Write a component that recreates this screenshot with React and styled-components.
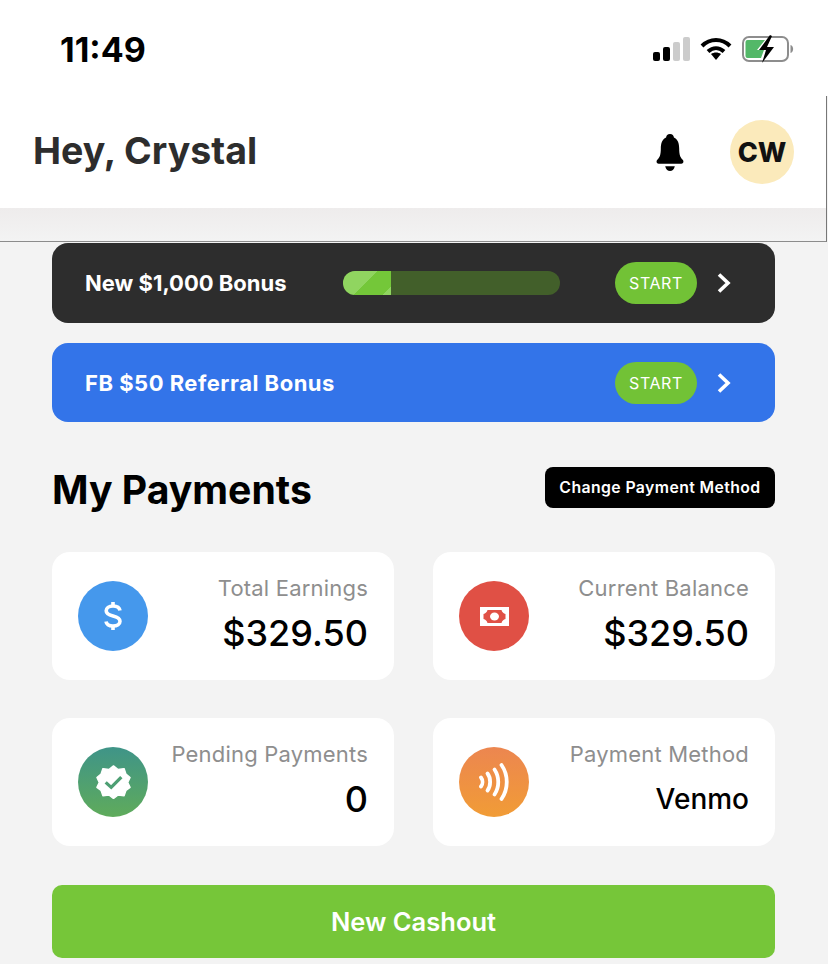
import styled, { createGlobalStyle } from "styled-components"

const GlobalStyle = createGlobalStyle`
    html, body {
        margin: 0;
        padding: 0;
        background-color: #f3f3f3;
    }
    * {
        box-sizing: border-box;
    }
    body {
        font-family: "Inter", "Liberation Sans", sans-serif;
    }
`;

const Page = styled.div`
    width: 828px;
    height: 964px;
    overflow: hidden;
    background-color: #f3f3f3;
`;

const StatusBar = styled.div`
    height: 96px;
    background-color: white;
    display: flex;
    align-items: center;
    justify-content: space-between;
    padding: 2px 33px 0 60px;
`;

const Time = styled.div`
    font-size: 34px;
    font-weight: 700;
    color: #000;
`;

const StatusIcons = styled.div`
    display: flex;
    align-items: center;
    gap: 10px;
`;

const HeaderFrame = styled.div`
    width: 827px;
    height: 146px;
    border-right: 1px solid #777;
    border-bottom: 1px solid #8c8c8c;
`;

const Header = styled.div`
    height: 112px;
    background-color: white;
    display: flex;
    align-items: center;
    padding: 0 32px 0 33px;
`;

const Greeting = styled.div`
    flex: 1;
    padding-bottom: 3px;
    font-size: 37.5px;
    font-weight: 700;
    color: #2d2d2d;
`;

const Bell = styled.svg`
    width: 28px;
    height: 37px;
    margin-right: 46px;
`;

const Avatar = styled.div`
    width: 64px;
    height: 64px;
    border-radius: 50%;
    background-color: #fbeabb;
    display: flex;
    align-items: center;
    justify-content: center;
    font-size: 27px;
    font-weight: 800;
    color: #111;
`;

const Shade = styled.div`
    height: 33px;
    background: linear-gradient(#eeecec, #f3f3f3);
`;

const Content = styled.div`
    padding: 1px 53px 0 52px;
`;

const Banner = styled.div`
    height: ${props => props.$height}px;
    margin-bottom: 20px;
    border-radius: 16px;
    background-color: ${props => props.$color};
    display: flex;
    align-items: center;
    padding: 0 43px 0 33px;
`;

const BannerTitle = styled.div`
    width: 258px;
    font-size: 22px;
    font-weight: 700;
    letter-spacing: ${props => props.$spacing}px;
    color: white;
    white-space: nowrap;
`;

const Progress = styled.div`
    overflow: hidden;
    width: 217px;
    height: 24px;
    border-radius: 12px;
    background-color: #425f2a;
`;

const ProgressFill = styled.div`
    height: 100%;
    background: linear-gradient(135deg, #90d560 0%, #90d560 48%, #74c739 48%, #74c739 88%, #90d560 88%);
`;

const StartPill = styled.div`
    width: 82px;
    height: 42px;
    margin-left: auto;
    border-radius: 21px;
    background-color: #72c236;
    display: flex;
    align-items: center;
    justify-content: center;
    font-size: 16px;
    letter-spacing: 0.6px;
    color: white;
`;

const Chevron = styled.svg`
    width: 16px;
    height: 22px;
    margin-left: 19px;
`;

const TitleRow = styled.div`
    height: 85px;
    margin-top: 45px;
    display: flex;
    align-items: flex-start;
    justify-content: space-between;
`;

const Heading = styled.h1`
    margin: 0;
    font-size: 39.2px;
    line-height: 46px;
    font-weight: 700;
    color: #000;
`;

const ChangeButton = styled.div`
    width: 230px;
    height: 41px;
    border-radius: 8px;
    background-color: #000;
    display: flex;
    align-items: center;
    justify-content: center;
    font-size: 15.8px;
    font-weight: 600;
    letter-spacing: 0.4px;
    color: white;
`;

const CardGrid = styled.div`
    display: grid;
    grid-template-columns: 342px 342px;
    grid-auto-rows: 128px;
    justify-content: space-between;
    row-gap: 38px;
`;

const Card = styled.div`
    border-radius: 18px;
    background-color: white;
    display: flex;
    align-items: center;
    justify-content: space-between;
    padding: 0 26px;
`;

const IconCircle = styled.div`
    width: 70px;
    height: 70px;
    border-radius: 50%;
    background: ${props => props.$bg};
    display: flex;
    align-items: center;
    justify-content: center;
`;

const CardText = styled.div`
    padding-bottom: 2px;
    text-align: right;
`;

const CardLabel = styled.div`
    font-size: 22px;
    line-height: 26px;
    letter-spacing: 0.2px;
    color: #8e8e8e;
    white-space: nowrap;
`;

const CardValue = styled.div`
    margin-top: 10px;
    font-size: ${props => props.$size}px;
    line-height: 44px;
    font-weight: 500;
    color: #000;
`;

const CashoutButton = styled.div`
    height: 73px;
    margin-top: 39px;
    border-radius: 10px;
    background-color: #76c639;
    display: flex;
    align-items: center;
    justify-content: center;
    font-size: 25.5px;
    font-weight: 600;
    color: white;
`;

const SignalIcon = () => (
    <svg width="38" height="24" viewBox="0 0 38 24">
        <rect x="1" y="15" width="7" height="9" rx="2" fill="#000" />
        <rect x="11" y="10" width="7" height="14" rx="2" fill="#000" />
        <rect x="21" y="5" width="7" height="19" rx="2" fill="#ccc" />
        <rect x="31" y="0" width="7" height="24" rx="2" fill="#ccc" />
    </svg>
)

const WifiIcon = () => (
    <svg width="32" height="24" viewBox="0 0 32 24" fill="none" stroke="#000" strokeWidth="4">
        <path d="M2 9 C10 1 22 1 30 9" />
        <path d="M8 14.5 C13 10 19 10 24 14.5" />
        <path d="M11 17 L16 23 L21 17 C18 15 14 15 11 17 Z" fill="#000" stroke="none" />
    </svg>
)

const BatteryIcon = () => (
    <svg width="53" height="30" viewBox="0 0 53 30">
        <rect x="1" y="3" width="45" height="24" rx="6" fill="none" stroke="#8d8d8d" strokeWidth="2" />
        <path d="M3.500 8 a2 2 0 0 1 2-2 H23 L15 16 H22 L19 24 H5.500 a2 2 0 0 1-2-2 Z" fill="#53b868" />
        <path d="M28 1 L17 16 H24 L20 29 L32 13 H25 L30 2 Z" fill="#000" />
        <path d="M48.500 11 C52 12 52 18 48.500 19 Z" fill="#8d8d8d" />
    </svg>
)

const BellIcon = () => (
    <Bell viewBox="0 0 32 38" preserveAspectRatio="none">
        <path d="M16 0 C19 0 20 1.500 20.500 3.500 C25 5.500 26.500 9.500 26.500 15 C26.500 22 28 24.500 30.500 26.500 C32 28 31.500 30.500 29 30.500 H3 C0.500 30.500 0 28 1.500 26.500 C4 24.500 5.500 22 5.500 15 C5.500 9.500 7 5.500 11.500 3.500 C12 1.500 13 0 16 0 Z" fill="#000" />
        <path d="M10.500 33 H21.500 C20.500 36.500 18.500 38 16 38 C13.500 38 11.500 36.500 10.500 33 Z" fill="#000" />
    </Bell>
)

const ChevronIcon = () => (
    <Chevron viewBox="0 0 16 22">
        <path d="M3 2.500 L12 11 L3 19.500" fill="none" stroke="white" strokeWidth="3.600" />
    </Chevron>
)

const DollarIcon = () => (
    <svg width="20" height="30" viewBox="0 0 20 30" fill="none" stroke="white" strokeWidth="3.600">
        <path d="M17 9.500 C16.500 6.500 13.800 5 10 5 C5.800 5 3.200 7 3.200 9.800 C3.200 12.800 5.800 14 10 15 C14.200 16 17 17.300 17 20.300 C17 23.200 14.200 25 10 25 C6.200 25 3.500 23.500 3 20.500" />
        <path d="M10 1 V5 M10 25 V29" />
    </svg>
)

const MoneyIcon = () => (
    <svg width="29" height="19" viewBox="0 0 29 19">
        <path d="M0 0 H29 V19 H0 Z M7.500 3 C7 5 5.500 6.500 3.500 7 V12 C5.500 12.500 7 14 7.500 16 H21.500 C22 14 23.500 12.500 25.500 12 V7 C23.500 6.500 22 5 21.500 3 Z" fill="white" fillRule="evenodd" />
        <ellipse cx="14.500" cy="9.500" rx="4.500" ry="4" fill="white" />
    </svg>
)

const BadgeIcon = () => (
    <svg width="35" height="34" viewBox="0 0 38 38" preserveAspectRatio="none">
        <path d="M19 1 L24 5 L30.500 4 L32.500 10 L37 14 L34.500 19.500 L37 25 L32.500 28.500 L30.500 34.500 L24 33.500 L19 37.500 L14 33.500 L7.500 34.500 L5.500 28.500 L1 25 L3.500 19.500 L1 14 L5.500 10 L7.500 4 L14 5 Z" fill="white" stroke="white" strokeWidth="1.500" strokeLinejoin="round" />
        <path d="M10.500 19.500 L16.500 25 L27.500 13.500" fill="none" stroke="#4d9f73" strokeWidth="3.500" />
    </svg>
)

const ContactlessIcon = () => (
    <svg width="30" height="38" viewBox="0 0 30 38" fill="none" stroke="white" strokeWidth="3.800" strokeLinecap="round">
        <path d="M2 14.500 C4 17 4 21 2 23.500" />
        <path d="M8.500 10.500 C12 15 12 23 8.500 27.500" />
        <path d="M15.500 6.500 C20.500 14 20.500 24 15.500 31.500" />
        <path d="M22.500 2 C29.500 12 29.500 26 22.500 36" />
    </svg>
)

const banners = [
    { title: "New $1,000 Bonus", color: "#2d2d2d", height: 80, spacing: 0, progress: 22 },
    { title: "FB $50 Referral Bonus", color: "#3374e9", height: 79, spacing: 0.5 },
]

const cards = [
    { label: "Total Earnings", value: "$329.50", size: 36, bg: "#4598ec", icon: <DollarIcon /> },
    { label: "Current Balance", value: "$329.50", size: 36, bg: "#e05045", icon: <MoneyIcon /> },
    { label: "Pending Payments", value: "0", size: 36, bg: "linear-gradient(#3f9488, #5fab5b)", icon: <BadgeIcon /> },
    { label: "Payment Method", value: "Venmo", size: 28, bg: "linear-gradient(#ec8650, #f19c36)", icon: <ContactlessIcon /> },
]

const App = () => {
    return (
        <Page>
            <GlobalStyle />
            <StatusBar>
                <Time>11:49</Time>
                <StatusIcons>
                    <SignalIcon />
                    <WifiIcon />
                    <BatteryIcon />
                </StatusIcons>
            </StatusBar>
            <HeaderFrame>
                <Header>
                    <Greeting>Hey, Crystal</Greeting>
                    <BellIcon />
                    <Avatar>CW</Avatar>
                </Header>
                <Shade />
            </HeaderFrame>
            <Content>
                {banners.map(banner => (
                    <Banner key={banner.title} $color={banner.color} $height={banner.height}>
                        <BannerTitle $spacing={banner.spacing}>{banner.title}</BannerTitle>
                        {banner.progress && (
                            <Progress>
                                <ProgressFill style={{ width: `${banner.progress}%` }} />
                            </Progress>
                        )}
                        <StartPill>START</StartPill>
                        <ChevronIcon />
                    </Banner>
                ))}
                <TitleRow>
                    <Heading>My Payments</Heading>
                    <ChangeButton>Change Payment Method</ChangeButton>
                </TitleRow>
                <CardGrid>
                    {cards.map(card => (
                        <Card key={card.label}>
                            <IconCircle $bg={card.bg}>{card.icon}</IconCircle>
                            <CardText>
                                <CardLabel>{card.label}</CardLabel>
                                <CardValue $size={card.size}>{card.value}</CardValue>
                            </CardText>
                        </Card>
                    ))}
                </CardGrid>
                <CashoutButton>New Cashout</CashoutButton>
            </Content>
        </Page>
    )
}

export default App
